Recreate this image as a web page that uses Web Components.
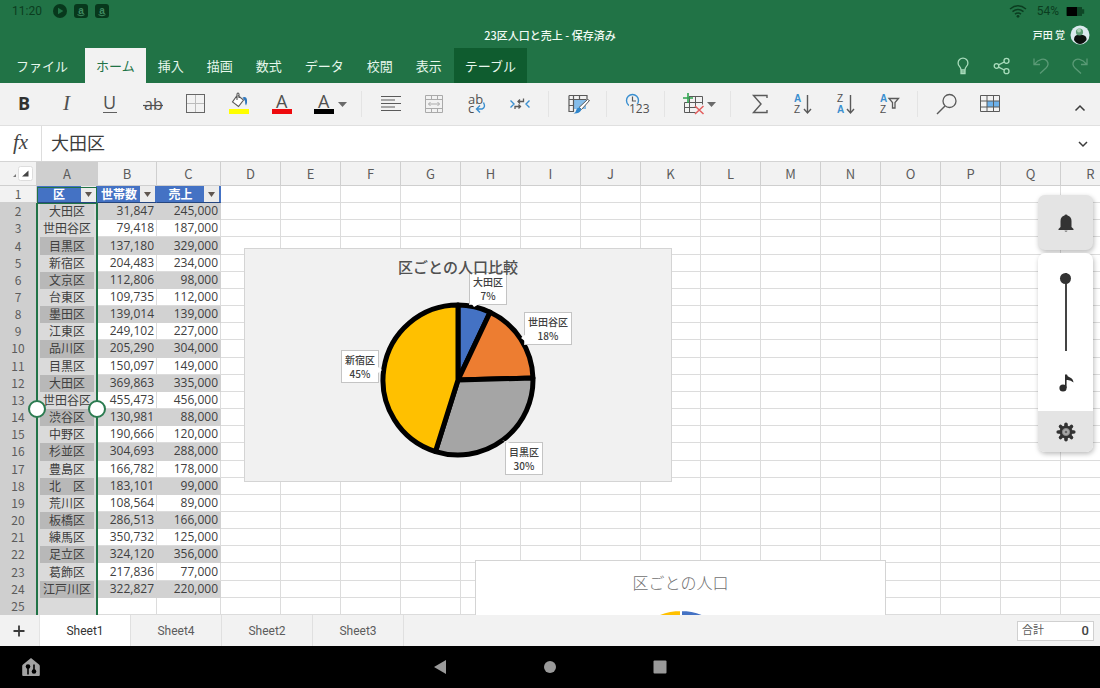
<!DOCTYPE html>
<html lang="ja">
<head>
<meta charset="utf-8">
<meta name="viewport" content="width=device-width, initial-scale=1">
<title>23区人口と売上</title>
<style>
html, body { margin: 0; height: 100%; }
body { font-family: "Roboto", "Noto Sans CJK JP", sans-serif; font-size: 12px; line-height: 16px; color: #444; background: #000; overflow: hidden; }
</style>
</head>
<body>
<workbook-app>
  <status-bar slot="top" time="11:20" battery="54%"></status-bar>
  <title-bar slot="top" user="戸田 覚">23区人口と売上 - 保存済み</title-bar>
  <ribbon-tabs slot="top"></ribbon-tabs>
  <tool-ribbon slot="top"></tool-ribbon>
  <formula-bar slot="top" value="大田区"></formula-bar>
  <sheet-view slot="main"></sheet-view>
  <sheet-tabs slot="bottom"></sheet-tabs>
  <nav-bar slot="bottom"></nav-bar>
</workbook-app>

<script>
const BASE = `
  :host, *, *::before, *::after { box-sizing: border-box; }
  button, input { font: inherit; color: inherit; background: none; border: 0; margin: 0; padding: 0; outline: none; }
  ui-icon { flex: none; }
`;
function define(name, render, after) {
  customElements.define(name, class extends HTMLElement {
    connectedCallback() {
      if (this.shadowRoot) return;
      const root = this.attachShadow({ mode: 'open' });
      const t = document.createElement('template');
      t.innerHTML = '<style>' + BASE + '</style>' + render(this);
      root.append(t.content.cloneNode(true));
      if (after) after(this, root);
    }
  });
}

/* ---------- icons: name -> [width, height, markup] ---------- */
const letter = (x, y, s, t, c = '#505050', w = 400) =>
  `<text x="${x}" y="${y}" font-family="Open Sans, sans-serif" font-size="${s}" font-weight="${w}" fill="${c}">${t}</text>`;
const small = (y, t, c = '#505050') =>
  `<text x="5" y="${y}" font-family="Liberation Sans, sans-serif" font-size="10" font-weight="${c === '#505050' ? 400 : 700}" fill="${c}">${t}</text>`;
const G = 'fill="none" stroke="#5a5a5a"';
const L = 'fill="none" stroke="#aaa"';
const BL = 'fill="none" stroke="#3a8fd0" stroke-width="1.4"';
const arrowDown = `<path ${G} stroke-width="1.4" d="M18.5 5v17.500M15 19l3.500 4 3.500-4"/>`;
const ICONS = {
  play: [14, 14, '<circle cx="7" cy="7" r="7" fill="#07381c"/><path d="M5 3.800v6.400L10.300 7z" fill="#217346"/>'],
  store: [14, 14, '<rect width="14" height="14" rx="3" fill="#07381c"/><text x="7" y="9.500" text-anchor="middle" font-family="Liberation Sans, sans-serif" font-weight="700" font-size="10" fill="#3f8a60">a</text><path d="M3.500 10.700q3.500 2.200 7 0" fill="none" stroke="#3f8a60"/>'],
  wifi: [18, 14, '<g fill="none" stroke="#0b3d20" stroke-width="1.500"><path d="M1 5q8-6.500 16 0M3.500 7.600q5.500-4.400 11 0M6 10.200q3-2.300 6 0"/></g><circle cx="9" cy="12.300" r="1.400" fill="#0b3d20"/>'],
  battery: [19, 9, '<path d="M1 0h15v2.200h2.200v4.600H16V9H1q-1 0-1-1V1q0-1 1-1" fill="#0e4626"/><rect x="1" y="0" width="10" height="9" fill="#000"/>'],
  avatar: [20, 20, '<circle cx="10" cy="10" r="9.500" fill="#dbe9ee"/><path d="M4 15q0-5 4-5h5q4 1 3.500 5-3 4-6.500 4t-6-4" fill="#0c100e"/><circle cx="9.500" cy="7" r="3.600" fill="#5c9b74"/><circle cx="9" cy="5.600" r="2" fill="#a8d0b4"/>'],
  bulb: [20, 20, '<g fill="none" stroke="#a9dcbc" stroke-width="1.300"><path d="M8 14q0-2-1.500-3.600a4.900 4.900 0 1 1 7 0Q12 12 12 14zM8 14v3.500h4V14M8 15.800h4"/></g>'],
  share: [20, 20, '<g fill="none" stroke="#a9dcbc" stroke-width="1.300"><circle cx="4.500" cy="10" r="2.300"/><circle cx="14.500" cy="4.800" r="2.500"/><circle cx="14.500" cy="15.200" r="2.500"/><path d="M6.600 8.900l5.700-2.900M6.600 11.100l5.700 2.900"/></g>'],
  undo: [20, 20, '<path fill="none" stroke="#5a9a76" stroke-width="1.300" d="M3 2.500v6h6M3.300 8.300C8 2.500 13.500 1.800 16 5c1.800 2.500 1 5-1 7l-6 5.500"/>'],
  redo: [20, 20, '<path fill="none" stroke="#5a9a76" stroke-width="1.300" d="M17 2.500v6h-6M16.700 8.300C12 2.500 6.500 1.800 4 5c-1.800 2.500-1 5 1 7l6 5.500"/>'],
  caret: [9, 5, '<path d="M0 0h9L4.500 5z" fill="#6a6a6a"/>'],
  smallcaret: [7, 5, '<path d="M0 0h7L3.500 5z" fill="#5f5650"/>'],
  bold: [28, 28, letter(8, 20, 18, 'B', '#303030', 700)],
  italic: [28, 28, '<text x="10" y="20" font-family="Liberation Serif, serif" font-style="italic" font-size="21" fill="#505050">I</text>'],
  underline: [28, 28, letter(7, 19, 18, 'U') + '<path d="M7 22.500h14" stroke="#606060"/>'],
  strike: [28, 28, letter(5, 20, 16, 'ab') + '<path d="M4 15.500h20" stroke="#505050" stroke-width="1.200"/>'],
  borders: [28, 28, '<path fill="none" stroke="#bbb" d="M13.500 5v18M5 13.500h18"/><rect x="4.500" y="4.500" width="18" height="18" fill="none" stroke="#666"/>'],
  fill: [28, 28, '<path d="M12 5.500L7.500 12l6 4.500 5-6.500-5.500-4.500M12 10V4q1-2 2 0v4" fill="#fff" stroke="#5a5a5a" stroke-width="1.100"/><path d="M17.500 7.500q4-1.500 4.500 2.500.5 4-1 5.500-1-1-1-4.500z" fill="#3178bd"/><rect x="4" y="19" width="20" height="5" fill="#ff0"/>'],
  fontred: [28, 28, letter(8, 18, 18, 'A') + '<rect x="4" y="19" width="20" height="5" fill="#ee0a0e"/>'],
  fontblack: [28, 28, letter(8, 18, 18, 'A') + '<rect x="4" y="19" width="20" height="5" fill="#000"/>'],
  align: [28, 28, `<path ${G} stroke-width="1.200" d="M4 6.500h20M4 10h14M4 13.500h20M4 17h14M4 20.500h20"/>`],
  merge: [28, 28, `<path ${L} d="M5.500 5.500h17v17h-17zM5.500 9.500h17M5.500 18.500h17M11.500 5.500v4M17.500 5.500v4M11.500 18.500v4M17.500 18.500v4M8.500 14h11M10.500 12l-2 2 2 2M17.500 12l2 2-2 2"/>`],
  wrap: [28, 28, letter(5, 14, 13, 'ab') + letter(5, 23, 13, 'c') + `<path ${BL} d="M20.500 12.500q2.500 5-1.500 6.500h-5M17 15.500L13.500 19l3.500 3.500"/>`],
  shrink: [28, 28, `<path ${BL} d="M4.500 10.500L8 14l-3.500 3.500M23.500 10.500L20 14l3.500 3.500"/><path ${G} stroke-width="1.300" d="M17.500 8.500v3h-5M14 9.500l-2 2 2 2M9 19v-2.500h5M12.500 14.500l2 2-2 2"/>`],
  tablestyle: [28, 28, `<rect x="9" y="9" width="13" height="10" fill="#85bdea"/><path ${G} stroke-width="1.200" d="M5 5.500h18v5M5 5.500v16h5M5 9.500h17M9.500 5.500v16M5 15.500h5M15.500 5.500v4"/><path d="M23.500 9.500l2 1-8 9-2.500-2z" fill="#fff" stroke="#5a5a5a"/><path d="M15 17.500q2.500.5 2 3-2 3.500-7.500 3 2.500-1 2.500-3 .5-2.500 3-3" fill="#2f86cc"/>`],
  number: [28, 28, `<circle cx="10.500" cy="10.500" r="6" ${BL}/><path ${G} stroke-width="1.200" d="M10.500 6.500v4.500h3.500"/><rect x="7" y="14" width="18" height="10" fill="#f2f2f2"/>` + letter(7, 23, 12, '123')],
  cells: [28, 28, `<path ${G} d="M10 6.500h13.500v8M10.500 6.500v16M5.500 12.500h18M5.500 12.500v10h11M5.500 17.500h12M16.500 6.500v11"/><path stroke="#2fa44f" stroke-width="1.600" d="M9 3v10M4 8h10" /><path stroke="#e35d5d" stroke-width="1.500" d="M16 16l8.500 8M24.500 16l-8.500 8"/>`],
  sigma: [28, 28, `<path ${G} stroke-width="1.400" d="M21 8V5.500H7.500L15 14l-7.500 8.500H21V20"/>`],
  az: [28, 28, small(12, 'A', '#3a8fd0') + small(23, 'Z') + arrowDown],
  za: [28, 28, small(12, 'Z') + small(23, 'A', '#3a8fd0') + arrowDown],
  azfilter: [28, 28, small(12, 'A', '#3a8fd0') + small(23, 'Z') + `<path ${G} stroke-width="1.300" d="M14 8.500h9.500l-3.500 4v5.500h-2.500v-5.500z"/>`],
  search: [28, 28, `<circle cx="16.500" cy="11" r="6.500" ${G} stroke-width="1.300"/><path ${G} stroke-width="1.500" d="M12 16l-8 8"/>`],
  highlight: [28, 28, `<rect x="11" y="11" width="13" height="6" fill="#6db1ea"/><path ${G} d="M4.500 5.500h19v16h-19zM4.500 11h19M4.500 17h19M11 5.500v16M17.500 5.500v16"/>`],
  up: [12, 8, '<path fill="none" stroke="#3c3c3c" stroke-width="1.500" d="M1.500 6.500L6 2l4.500 4.500"/>'],
  down: [12, 8, '<path fill="none" stroke="#3c3c3c" stroke-width="1.500" d="M2 2l4 4 4-4"/>'],
  corner: [22, 16, '<path d="M0 11h3V8z" fill="#777"/><rect x="5.500" y=".5" width="14" height="14" rx="2" fill="#fff" stroke="#ddd"/><path d="M9 10.500h6.500V4.500z" fill="#444"/>'],
  bell: [20, 20, '<path d="M10 1.500q-1.500 0-1.500 1-4 1-4 5.500v6L2.500 16v1h15v-1l-2-2V8q0-4.500-4-5.500 0-1-1.500-1" fill="#333"/><path d="M8.500 17.500h3q-.3 1.500-1.500 1.500t-1.500-1.500" fill="#888"/>'],
  note: [18, 20, '<circle cx="6" cy="15" r="3.600" fill="#2c2c2c"/><path d="M8 15V1.500h2q0 2 3 3t3.500 5q-3-3-6.900-2.500V15z" fill="#2c2c2c"/>'],
  gear: [20, 20, '<g stroke="#333" stroke-width="3.600" stroke-linecap="round"><path d="M10 2.200v15.600M2.200 10h15.600M4.500 4.500l11 11M15.500 4.500l-11 11"/></g><circle cx="10" cy="10" r="6.500" fill="#333"/><circle cx="10" cy="10" r="3.600" fill="#aaa" stroke="#888"/><circle cx="10" cy="10" r="1.300" fill="#666"/>'],
  plus: [12, 12, '<path d="M6 0.500v11M.5 6h11" stroke="#3a3a3a" stroke-width="1.800"/>'],
  home: [20, 20, '<path d="M10 1l8 6.500q.8.600.8 1.500v9q0 1-1 1H2.200q-1 0-1-1V9q0-.9.800-1.500z" fill="#a3a3a3"/><path d="M7 17.500V11M13 7.500V13" stroke="#000" stroke-width="1.600"/><circle cx="7" cy="9.500" r="2.300"/><circle cx="13" cy="14.500" r="2.300"/>'],
  back: [14, 14, '<path d="M13 0v14L1 7z" fill="#9a9a9a"/>'],
  circle: [14, 14, '<circle cx="7" cy="7" r="6" fill="#9a9a9a"/>'],
  square: [14, 14, '<rect x=".5" y=".5" width="13" height="13" rx="1" fill="#9a9a9a"/>']
};
define('ui-icon', el => {
  const [w, h, body] = ICONS[el.getAttribute('name')];
  return `<style>:host{display:block;width:${w}px;height:${h}px} svg{display:block}</style>
  <svg width="${w}" height="${h}" viewBox="0 0 ${w} ${h}" aria-hidden="true">${body}</svg>`;
});

/* ---------- application frame ---------- */
define('workbook-app', () => `<style>
  :host { display: flex; flex-direction: column; height: 100vh; }
  main { flex: 1; min-height: 0; display: flex; }
  ::slotted(sheet-view) { flex: 1; min-width: 0; }
</style><header><slot name="top"></slot></header><main><slot name="main"></slot></main><footer><slot name="bottom"></slot></footer>`);

define('status-bar', el => `<style>
  :host { display: flex; align-items: center; gap: 7px; height: 22px; padding: 0 15px 0 12px; background: #217346; color: #0b3d20; }
  .time { margin-right: 4px; }
  .fill { flex: 1; }
  .wifi { margin-right: 3px; }
</style><span class="time">${el.getAttribute('time')}</span>
<ui-icon name="play"></ui-icon><ui-icon name="store"></ui-icon><ui-icon name="store"></ui-icon>
<span class="fill"></span><ui-icon class="wifi" name="wifi"></ui-icon><span>${el.getAttribute('battery')}</span><ui-icon name="battery"></ui-icon>`);

define('title-bar', el => `<style>
  :host { display: grid; grid-template-columns: 1fr auto 1fr; align-items: center; height: 26px; padding: 0 10px; background: #217346; color: #f2fbf5;
    font-family: "Noto Sans CJK JP", sans-serif; }
  h1 { grid-column: 2; margin: 0; font-size: 11px; font-weight: 500; }
  .user { justify-self: end; display: flex; align-items: center; gap: 5px; font-size: 10px; font-weight: 500; }
</style><h1><slot></slot></h1><button class="user">${el.getAttribute('user')}<ui-icon name="avatar"></ui-icon></button>`);

define('ribbon-tabs', () => `<style>
  :host { display: flex; height: 35px; padding-right: 1px; background: #217346; color: #e6f7ec; font-family: "Noto Sans CJK JP", sans-serif; font-size: 13px; }
  nav { display: flex; gap: 1px; flex: 1; }
  nav button { padding: 0 11px; white-space: nowrap; }
  nav .file { padding: 0 16px; }
  nav .on { background: #f2f2f2; color: #217346; }
  nav .context { background: #0f5c2f; }
  .actions { display: flex; }
  .actions button { width: 39px; display: grid; place-items: center; }
</style><nav>
<button class="file">ファイル</button><button class="on">ホーム</button><button>挿入</button><button>描画</button><button>数式</button><button>データ</button><button>校閲</button><button>表示</button><button class="context">テーブル</button></nav>
<div class="actions"><button aria-label="ヒント"><ui-icon name="bulb"></ui-icon></button><button aria-label="共有"><ui-icon name="share"></ui-icon></button><button aria-label="元に戻す"><ui-icon name="undo"></ui-icon></button><button aria-label="やり直し"><ui-icon name="redo"></ui-icon></button></div>`);

const TOOLS = [
  ['bold', '太字'], ['italic', '斜体'], ['underline', '下線'], ['strike', '取り消し線'], ['borders', '罫線'], ['fill', '塗りつぶし'], ['fontred', 'フォントの色'], ['fontblack', '文字の書式', 1], null,
  ['align', '配置'], ['merge', 'セルの結合'], ['wrap', '折り返し'], ['shrink', '縮小'], null,
  ['tablestyle', 'セルのスタイル'], null, ['number', '表示形式'], null, ['cells', '挿入と削除', 1], null,
  ['sigma', '合計'], ['az', '昇順'], ['za', '降順'], ['azfilter', '並べ替えとフィルター'], null, ['search', '検索'], ['highlight', '書式']
];
define('tool-ribbon', () => `<style>
  :host { display: flex; align-items: center; height: 43px; padding-left: 2px; background: #f2f2f2; border-bottom: 1px solid #e0e0e0; }
  button { width: 43px; height: 42px; display: flex; align-items: center; justify-content: center; flex: none; }
  .menu { width: 51px; padding-left: 7px; justify-content: flex-start; }
  hr { width: 1px; height: 26px; margin: 0 7px; border: 0; background: #e4e4e4; flex: none; }
  .collapse { margin-left: auto; width: 40px; align-items: flex-end; padding-bottom: 13px; }
</style>` + TOOLS.map(t => t ? `<button class="${t[2] ? 'menu' : ''}" aria-label="${t[1]}"><ui-icon name="${t[0]}"></ui-icon>${t[2] ? '<ui-icon name="caret"></ui-icon>' : ''}</button>` : '<hr>').join('')
  + '<button class="collapse" aria-label="リボンを閉じる"><ui-icon name="up"></ui-icon></button>');

define('formula-bar', el => `<style>
  :host { display: flex; height: 36px; background: #fff; border-bottom: 1px solid #d4d4d4; }
  label { width: 42px; display: grid; place-items: center; border-right: 1px solid #ddd; padding-bottom: 3px; font: italic 21px/24px "Liberation Serif", serif; color: #444; }
  input { flex: 1; min-width: 0; padding: 0 9px 4px; font: 18px/24px "Noto Sans CJK JP", sans-serif; color: #3c3c3c; }
  button { width: 35px; display: grid; place-items: center; }
</style><label for="fx">fx</label><input id="fx" value="${el.getAttribute('value')}"><button aria-label="展開"><ui-icon name="down"></ui-icon></button>`);

/* ---------- worksheet ---------- */
const DATA = [['大田区','31,847','245,000'],['世田谷区','79,418','187,000'],['目黒区','137,180','329,000'],['新宿区','204,483','234,000'],['文京区','112,806','98,000'],['台東区','109,735','112,000'],['墨田区','139,014','139,000'],['江東区','249,102','227,000'],['品川区','205,290','304,000'],['目黒区','150,097','149,000'],['大田区','369,863','335,000'],['世田谷区','455,473','456,000'],['渋谷区','130,981','88,000'],['中野区','190,666','120,000'],['杉並区','304,693','288,000'],['豊島区','166,782','178,000'],['北　区','183,101','99,000'],['荒川区','108,564','89,000'],['板橋区','286,513','166,000'],['練馬区','350,732','125,000'],['足立区','324,120','356,000'],['葛飾区','217,836','77,000'],['江戸川区','322,827','220,000']];
const COLS = [...'ABCDEFGHIJKLMNOPQR'];
const filler = '<td></td>'.repeat(COLS.length - 3);
const head = t => `<td class="th"><div><span>${t}</span><button aria-label="${t}のフィルター"><ui-icon name="smallcaret"></ui-icon></button></div></td>`;

define('sheet-grid', () => `<style>
  :host { display: block; height: 100%; font-family: "Noto Sans CJK JP", sans-serif; }
  table { width: 100%; min-width: 1121px; height: 100%; table-layout: fixed; border-collapse: separate; border-spacing: 0; background: #fff; }
  .rows { width: 37px; } .a { width: 61px; } .b { width: 59px; } .c { width: 64px; } .n { width: 60px; }
  td, th { padding: 0; height: 17px; line-height: 16px; border: solid #dcdcdc; border-width: 0 1px 1px 0; white-space: nowrap; overflow: hidden; }
  thead th { height: 24px; background: #f2f2f2; font-weight: 400; font-size: 13px; color: #5c5c5c; border-color: #cfcfcf; }
  thead .sel { background: #cfcfcf; }
  thead button { display: block; margin-left: 13px; }
  tbody th { background: #cfcfcf; border-color: #cfcfcf; font-weight: 400; color: #5c5c5c; }
  tbody tr:first-child th { background: #f2f2f2; }
  td.v { text-align: right; padding-right: 2px; font-family: "Open Sans", sans-serif; color: #404040; }
  td.k { text-align: center; background: #dadada; border-color: #dadada; color: #404040; }
  .band td.v { background: #d2d2d2; border-color: #d2d2d2; }
  .band td.k { background: #b8b8b8; border-color: #b8b8b8; }
  .band.active td.k { background: #d2d2d2; border-color: #d2d2d2; }
  td.th { background: #4472c4; color: #fff; font-weight: 700; border-color: #26467e; border-right-color: #4472c4; }
  td.th div { display: flex; height: 16px; padding-right: 1px; }
  td.th span { flex: 1; text-align: center; }
  td.th button { width: 15px; display: grid; place-items: center; background: #ececec; }
</style><table><colgroup><col class="rows"><col class="a"><col class="b"><col class="c">${'<col class="n">'.repeat(14)}<col></colgroup>
<thead><tr><th><button aria-label="すべて選択"><ui-icon name="corner"></ui-icon></button></th>${COLS.map((c, i) => `<th scope="col" class="${i ? '' : 'sel'}">${c}</th>`).join('')}</tr></thead>
<tbody><tr><th scope="row">1</th>${head('区')}${head('世帯数')}${head('売上')}${filler}</tr>
${DATA.map((r, i) => `<tr class="${i % 2 ? '' : 'band'} ${i ? '' : 'active'}"><th scope="row">${i + 2}</th><td class="k">${r[0]}</td><td class="v">${r[1]}</td><td class="v">${r[2]}</td>${filler}</tr>`).join('')}
<tr><th scope="row">25</th><td class="k"></td><td></td><td></td>${filler}</tr></tbody></table>`);

const SLICES = [[31847, '#4472c4'], [79418, '#ed7d31'], [137180, '#a5a5a5'], [204483, '#ffc000']];
define('pie-chart', el => {
  const r = +el.getAttribute('radius'), s = +el.getAttribute('outline'), c = r + s, line = el.getAttribute('line');
  const total = SLICES.reduce((n, x) => n + x[0], 0);
  let a = 0;
  const pt = t => `${(c + r * Math.sin(t)).toFixed(2)} ${(c - r * Math.cos(t)).toFixed(2)}`;
  const paths = SLICES.map(([v, col]) => {
    const b = a + v / total * Math.PI * 2;
    const d = `M${c} ${c}L${pt(a)}A${r} ${r} 0 ${b - a > Math.PI ? 1 : 0} 1 ${pt(b)}Z`;
    a = b;
    return `<path d="${d}" fill="${col}"/>`;
  }).join('');
  return `<style>:host { display: block; } svg { display: block; }</style>
  <svg width="${2 * c}" height="${2 * c}" viewBox="0 0 ${2 * c} ${2 * c}" role="img" aria-label="円グラフ" stroke="${line}" stroke-width="${s}" stroke-linejoin="round">${paths}</svg>`;
});

define('chart-label', () => `<style>
  :host { display: block; position: absolute; padding: 2px 3px 1px; background: #fff; border: 1px solid #c4c4c4; font: 500 10px/14px "Noto Sans CJK JP", sans-serif; color: #404040; text-align: center; white-space: nowrap; }
</style><slot></slot><br><slot name="share"></slot>`);

define('sheet-view', () => `<style>
  :host { display: block; position: relative; overflow: hidden; background: #fff; }
  .selection { position: absolute; left: 36px; top: 41px; bottom: 0; width: 62px; border: solid #217346; border-width: 1px 2px 0; box-shadow: inset 2px 0 #dcdcdc, inset -2px 0 #dcdcdc; }
  .selection::before { content: ""; position: absolute; left: -1px; right: -1px; bottom: 100%; height: 17px; border: solid #217346; border-width: 1px 1px 0; }
  .handle { position: absolute; top: 238px; width: 18px; height: 18px; border: 2px solid #2b7b50; border-radius: 9px; background: #fff; }
  .h1 { left: 28px; } .h2 { left: 88px; }
  figure { position: absolute; margin: 0; border: 1px solid #d4d4d4; font-family: "Noto Sans CJK JP", sans-serif; text-align: center; }
  figcaption { position: relative; z-index: 1; padding-top: 6px; }
  pie-chart { position: absolute; }
  .one { left: 244px; top: 86px; width: 428px; height: 234px; background: #f1f1f1; }
  .one figcaption { font-size: 15px; line-height: 24px; font-weight: 500; color: #505050; }
  .one pie-chart { left: 133px; top: 51px; }
  .two { left: 475px; top: 398px; width: 411px; height: 234px; background: #fff; }
  .two figcaption { font-size: 16px; line-height: 30px; font-weight: 300; color: #707070; }
  .two pie-chart { left: 147px; top: 47px; }
  .tails { position: absolute; left: 0; top: 0; }
  side-panel { position: absolute; right: 7px; top: 33px; }
</style><sheet-grid></sheet-grid>
<div class="selection"></div><span class="handle h1"></span><span class="handle h2"></span>
<figure class="one"><figcaption>区ごとの人口比較</figcaption>
<pie-chart radius="75" outline="5" line="#000"></pie-chart>
<chart-label style="left:224px;top:23px">大田区<span slot="share">7%</span></chart-label>
<chart-label style="left:279px;top:63px">世田谷区<span slot="share">18%</span></chart-label>
<chart-label style="left:260px;top:193px">目黒区<span slot="share">30%</span></chart-label>
<chart-label style="left:96px;top:101px">新宿区<span slot="share">45%</span></chart-label>
<svg class="tails" width="426" height="232" fill="#fff" aria-hidden="true"><path d="M226 54h10l-7 4zM281 85v8l-5-4zM262 194l-5-3 8 3zM133 118v6l4-3z"/></svg>
</figure>
<figure class="two"><figcaption>区ごとの人口</figcaption><pie-chart radius="56" outline="2" line="#fff"></pie-chart></figure>
<side-panel></side-panel>`);

define('side-panel', () => `<style>
  :host { display: flex; flex-direction: column; gap: 3px; width: 55px; }
  button { display: grid; place-items: center; background: #e4e4e4; }
  .bell { height: 55px; border-radius: 7px; box-shadow: 1px 2px 5px #0004; }
  .box { display: flex; flex-direction: column; align-items: center; border-radius: 7px; overflow: hidden; background: #fff; box-shadow: 1px 2px 5px #0004; }
  input { appearance: none; writing-mode: vertical-lr; direction: rtl; width: 12px; height: 78px; margin: 20px 0 22px; background: linear-gradient(90deg, transparent 5px, #444 5px 7px, transparent 7px); }
  input::-webkit-slider-thumb { appearance: none; width: 11px; height: 11px; border-radius: 50%; background: #333; }
  .gear { align-self: stretch; height: 41px; margin-top: 18px; }
</style><button class="bell" aria-label="通知"><ui-icon name="bell"></ui-icon></button>
<div class="box"><input type="range" min="0" max="100" value="100" aria-label="音量"><ui-icon name="note"></ui-icon><button class="gear" aria-label="設定"><ui-icon name="gear"></ui-icon></button></div>`);

define('sheet-tabs', () => `<style>
  :host { display: flex; height: 31px; padding-right: 6px; align-items: center; background: #f2f2f2; color: #5c5c5c; }
  button { height: 31px; width: 91px; border-right: 1px solid #e0e0e0; }
  .add { width: 40px; padding-right: 2px; display: grid; place-items: center; border-color: #e4e4e4; }
  .on { background: #fff; color: #333; }
  .sum { margin-left: auto; display: flex; align-items: center; justify-content: space-between; width: 77px; height: 20px; padding: 0 4px; background: #fff; border: 1px solid #d0d0d0; font-size: 11px; }
  output { font-size: 13px; font-weight: 500; color: #444; }
</style><button class="add" aria-label="シートの追加"><ui-icon name="plus"></ui-icon></button><button class="on">Sheet1</button><button>Sheet4</button><button>Sheet2</button><button>Sheet3</button>
<div class="sum"><label for="s">合計</label><output id="s">0</output></div>`);

define('nav-bar', () => `<style>
  :host { display: grid; grid-template-columns: 1fr auto 1fr; align-items: center; height: 42px; background: #000; }
  button { display: grid; place-items: center; width: 110px; height: 42px; }
  .home { width: 62px; }
  .keys { display: flex; }
</style><button class="home" aria-label="デバイス"><ui-icon name="home"></ui-icon></button>
<div class="keys"><button aria-label="戻る"><ui-icon name="back"></ui-icon></button><button aria-label="ホーム"><ui-icon name="circle"></ui-icon></button><button aria-label="最近"><ui-icon name="square"></ui-icon></button></div>`);
</script>
</body>
</html>
